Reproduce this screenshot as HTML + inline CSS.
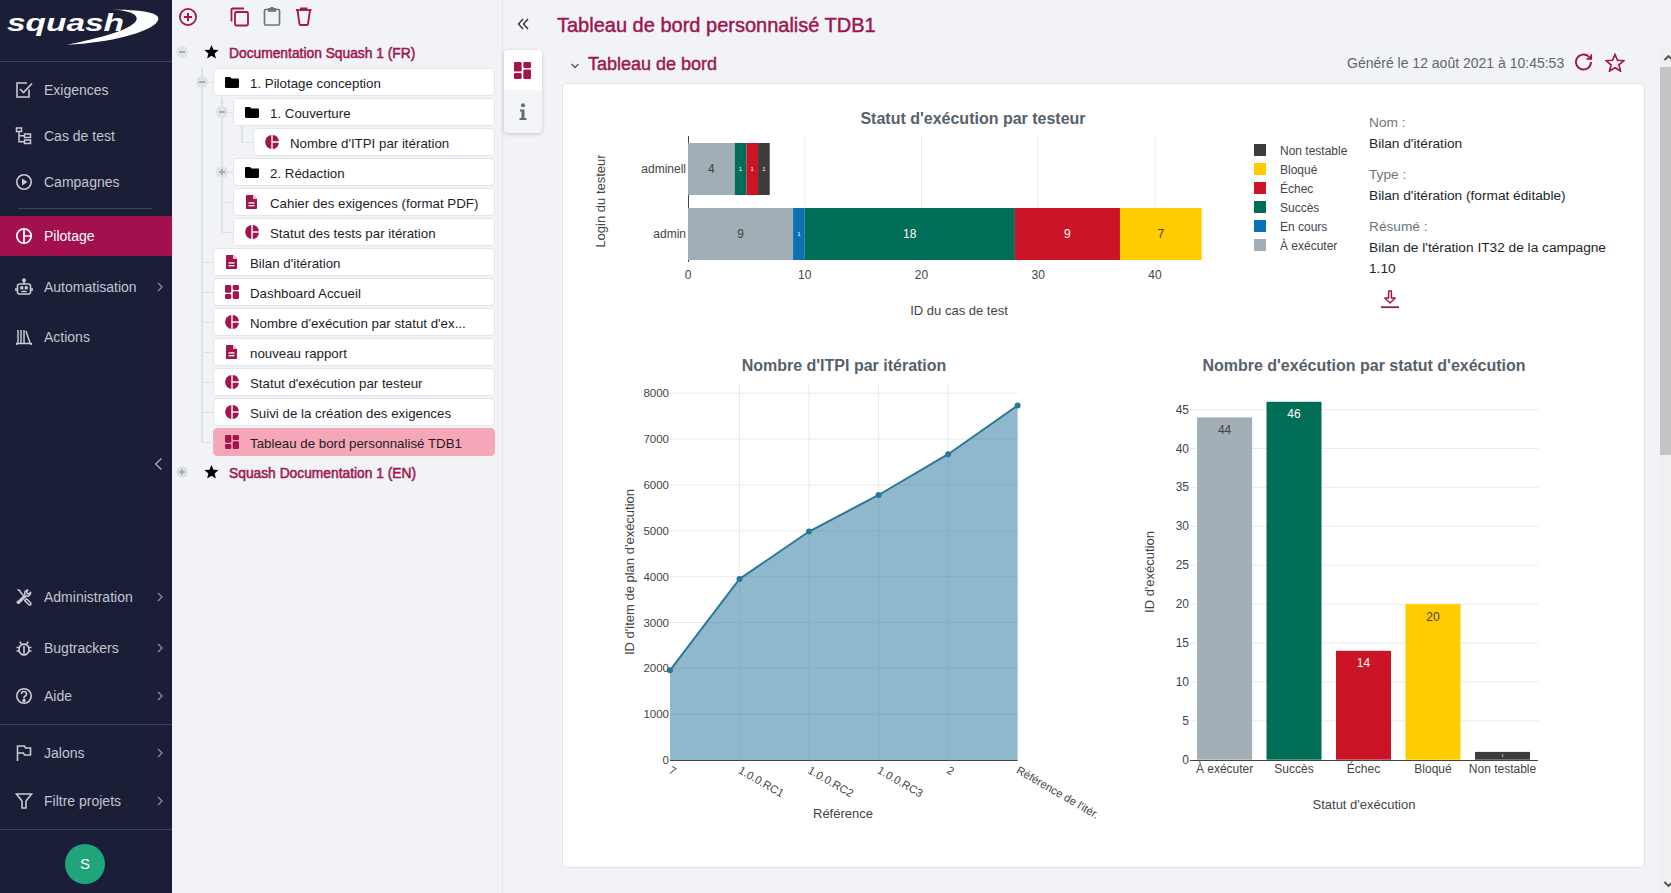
<!DOCTYPE html>
<html><head><meta charset="utf-8">
<style>
*{box-sizing:border-box;margin:0;padding:0}
html,body{width:1671px;height:893px;overflow:hidden;background:#f2f3f7;font-family:"Liberation Sans",sans-serif;position:relative}
.abs{position:absolute}
#side{position:absolute;left:0;top:0;width:172px;height:893px;background:#1b1e37}
.mi{position:absolute;left:0;width:172px;height:40px;color:#c2c5d0;font-size:14px}
.mi .t{position:absolute;left:44px;top:0;line-height:40px;white-space:nowrap}
.mi svg.ic{position:absolute;left:15px;top:10.5px;width:18px;height:18px}
.mi .ch{position:absolute;left:155px;top:14px;width:10px;height:12px}
.sep{position:absolute;height:1px;background:#3a3f5c}
#tree{position:absolute;left:172px;top:0;width:330px;height:893px;background:#f2f3f7}
#vline{position:absolute;left:502px;top:0;width:1px;height:893px;background:#e2e4ea}
.node{position:absolute;height:28px;background:#fff;border:1px solid #e3e6eb;border-radius:4px;font-size:13.3px;color:#1d1d1f;white-space:nowrap}
.node .t{position:absolute;top:1px;line-height:27px}
.node svg{position:absolute}
.tl{position:absolute;background:#dde1e6}
.tog{position:absolute;width:12px;height:12px;border-radius:50%;background:#dfe3e8}
.tog:after{content:"";position:absolute;left:3px;top:5px;width:6px;height:2px;background:#a4acb5}
.tog.plus:before{content:"";position:absolute;left:5px;top:3px;width:2px;height:6px;background:#a4acb5}
.proj{font-size:13.8px;-webkit-text-stroke:0.5px #a0164f;color:#a0164f;white-space:nowrap;line-height:18px}
.semi{-webkit-text-stroke:0.45px currentColor}
</style></head><body>

<div id="side">
  <!-- logo -->
  <svg class="abs" style="left:0;top:0" width="172" height="50" viewBox="0 0 172 50">
    <text x="7" y="30.7" font-family="Liberation Sans" font-weight="bold" font-style="italic" font-size="24.5" fill="#fff" textLength="117" lengthAdjust="spacingAndGlyphs">squash</text>
    <path d="M112 9.5 C150 10 163 14 157 22 C150 32 110 43 67 44.7 C100 38 130 30 136 21 C140 14 128 10.5 112 9.5 Z" fill="#fff"/>
  </svg>
  <div class="sep" style="left:0;top:61px;width:172px"></div>

  <div class="mi" style="top:70px"><svg class="ic" viewBox="0 0 18 18" fill="none" stroke="#c8cad4" stroke-width="1.6"><path d="M14 8.5V16H2V2h10"/><path d="M5 8l3.5 3.5L17 2.5"/></svg><span class="t">Exigences</span></div>
  <div class="mi" style="top:116px"><svg class="ic" viewBox="0 0 18 18" fill="none" stroke="#c8cad4" stroke-width="1.5"><rect x="1.5" y="1" width="5" height="3.5"/><rect x="9.5" y="7" width="6" height="3.5"/><rect x="9.5" y="13" width="6" height="3.5"/><path d="M4 4.5V14.7H9.5M4 8.8H9.5"/></svg><span class="t">Cas de test</span></div>
  <div class="mi" style="top:162px"><svg class="ic" viewBox="0 0 18 18" fill="none" stroke="#c8cad4" stroke-width="1.6"><circle cx="9" cy="9" r="7.2"/><path d="M7 5.5v7l5.5-3.5z" fill="#c8cad4" stroke="none"/></svg><span class="t">Campagnes</span></div>
  <div class="sep" style="left:18px;top:208px;width:134px"></div>
  <div class="mi" style="top:216px;background:#a2104d;color:#fff"><svg class="ic" viewBox="0 0 18 18" fill="none" stroke="#fff" stroke-width="1.7"><circle cx="9" cy="9" r="7.2"/><path d="M9 1.5v15M9 9h7.5"/></svg><span class="t" style="color:#fff">Pilotage</span></div>
  <div class="mi" style="top:267px"><svg class="ic" viewBox="0 0 18 18" fill="none" stroke="#c8cad4" stroke-width="1.6"><rect x="2.5" y="6" width="13" height="10" rx="2"/><path d="M9 6V3"/><circle cx="9" cy="2.2" r="1.2" fill="#c8cad4"/><path d="M1 10v3M17 10v3"/><rect x="6" y="9" width="1.5" height="1.5" fill="#c8cad4"/><rect x="10.5" y="9" width="1.5" height="1.5" fill="#c8cad4"/><path d="M6.5 13.5h5"/></svg><span class="t">Automatisation</span><svg class="ch" viewBox="0 0 10 12" fill="none" stroke="#8a8ea3" stroke-width="1.3"><path d="M3 2l4 4-4 4"/></svg></div>
  <div class="mi" style="top:317px"><svg class="ic" viewBox="0 0 18 18" fill="none" stroke="#c8cad4" stroke-width="1.5"><path d="M3 2v13M6 2v13M9 2v13M11 3l4 12M1 15.5h16M2 15v2M16 15v2"/></svg><span class="t">Actions</span></div>

  <div class="mi" style="top:577px"><svg class="ic" viewBox="0 0 18 18" fill="none" stroke="#c8cad4" stroke-width="1.5" stroke-linejoin="round"><path d="M2.5 1.5l2.5 1.2.6 1.8 4.6 4.6M11.5 10.8l4.2 4.2a1.3 1.3 0 0 1-1.8 1.8l-4.2-4.2z"/><path d="M2.2 14.6l6.6-6.6M13.3 2a3.3 3.3 0 0 0-3.4 4.6L9.7 7.5M13.3 2l-1.6 1.6.4 1.9 1.9.4 1.6-1.6a3.3 3.3 0 0 1-4.4 3.6l-7 7a1.1 1.1 0 0 1-1.6-1.6"/></svg><span class="t">Administration</span><svg class="ch" viewBox="0 0 10 12" fill="none" stroke="#8a8ea3" stroke-width="1.3"><path d="M3 2l4 4-4 4"/></svg></div>
  <div class="mi" style="top:628px"><svg class="ic" viewBox="0 0 18 18" fill="none" stroke="#c8cad4" stroke-width="1.6"><ellipse cx="9" cy="10.5" rx="5" ry="5.5"/><path d="M9 7v9M4 8.5H1.5M4 12H1.5M14 8.5h2.5M14 12h2.5M6 5l-1-2.5M12 5l1-2.5M6.5 5.5h5"/></svg><span class="t">Bugtrackers</span><svg class="ch" viewBox="0 0 10 12" fill="none" stroke="#8a8ea3" stroke-width="1.3"><path d="M3 2l4 4-4 4"/></svg></div>
  <div class="mi" style="top:676px"><svg class="ic" viewBox="0 0 18 18" fill="none" stroke="#c8cad4" stroke-width="1.6"><circle cx="9" cy="9" r="7.2"/><path d="M6.5 7a2.5 2.5 0 1 1 3.5 2.3c-.7.3-1 .8-1 1.5v.7"/><circle cx="9" cy="13.5" r=".9" fill="#c8cad4"/></svg><span class="t">Aide</span><svg class="ch" viewBox="0 0 10 12" fill="none" stroke="#8a8ea3" stroke-width="1.3"><path d="M3 2l4 4-4 4"/></svg></div>
  <div class="sep" style="left:0;top:724px;width:172px"></div>
  <div class="mi" style="top:733px"><svg class="ic" viewBox="0 0 18 18" fill="none" stroke="#c8cad4" stroke-width="1.6"><path d="M2.5 17V2h7l1 2h5v7h-6l-1-2H2.5"/></svg><span class="t">Jalons</span><svg class="ch" viewBox="0 0 10 12" fill="none" stroke="#8a8ea3" stroke-width="1.3"><path d="M3 2l4 4-4 4"/></svg></div>
  <div class="mi" style="top:781px"><svg class="ic" viewBox="0 0 18 18" fill="none" stroke="#c8cad4" stroke-width="1.6"><path d="M1.5 2h15l-5.5 7v7h-4V9z"/></svg><span class="t">Filtre projets</span><svg class="ch" viewBox="0 0 10 12" fill="none" stroke="#8a8ea3" stroke-width="1.3"><path d="M3 2l4 4-4 4"/></svg></div>
  <div class="sep" style="left:0;top:829px;width:172px"></div>
  <div class="abs" style="left:65px;top:844px;width:40px;height:40px;border-radius:50%;background:#20a57b;color:#fff;font-size:15px;line-height:40px;text-align:center">S</div>
  <svg class="abs" style="left:152px;top:457px" width="12" height="14" viewBox="0 0 12 14" fill="none" stroke="#b4b7c6" stroke-width="1.2"><path d="M9.5 1.5L3.5 7l6 5.5"/></svg>
</div>

<div id="tree">
  <svg class="abs" style="left:7px;top:7px" width="20" height="20" viewBox="0 0 20 20" fill="none" stroke="#a3154f" stroke-width="1.8"><circle cx="9" cy="10" r="8.1"/><path d="M9 6v8M5 10h8" stroke-width="2"/></svg>
  <svg class="abs" style="left:58px;top:7px" width="20" height="20" viewBox="0 0 20 20" fill="none" stroke="#a3154f" stroke-width="1.8"><path d="M1.5 14.5V2.5c0-.6.4-1 1-1h11.5"/><rect x="5" y="5" width="13" height="13.5" rx="1.2"/></svg>
  <svg class="abs" style="left:91px;top:6px" width="19" height="20" viewBox="0 0 19 20" fill="none" stroke="#6c7480" stroke-width="1.7"><path d="M5.5 3.5H2.5c-.6 0-1 .4-1 1v13.5c0 .6.4 1 1 1h13c.6 0 1-.4 1-1V4.5c0-.6-.4-1-1-1h-3"/><path d="M5.5 5.2h7V2.6H10.3a1.3 1.3 0 0 0-2.6 0H5.5z" fill="#6c7480" stroke-width="1.2"/></svg>
  <svg class="abs" style="left:123px;top:7px" width="19" height="20" viewBox="0 0 19 20" fill="none" stroke="#a3154f" stroke-width="1.8"><path d="M1 3h15.5"/><path d="M2.5 3l2 14c.1.6.5 1 1.1 1h6.3c.6 0 1-.4 1.1-1l2-14"/><path d="M6 3V1.5h5.5V3"/></svg>

  <div class="tog" style="left:4px;top:46px"></div>
  <svg class="abs" style="left:31.5px;top:43.5px" width="15" height="15" viewBox="0 0 24 24"><path d="M12 1.5l3.1 7.6 8.2.6-6.3 5.3 2 8L12 18.6 5 23l2-8L.7 9.7l8.2-.6z" fill="#000"/></svg>
  <div class="abs proj" style="left:57px;top:44.5px">Documentation Squash 1 (FR)</div>

  <div class="tl" style="left:29px;top:67px;width:2px;height:375px"></div>
  <div class="tl" style="left:49px;top:97px;width:2px;height:135px"></div>
  <div class="tl" style="left:69px;top:126px;width:1.5px;height:16px"></div>
<div class="node" style="left:41px;top:68px;width:282px"><svg style="left:11px;top:8px" width="14" height="11" viewBox="0 0 14 11"><path d="M0 1.2C0 .5.5 0 1.2 0H5l1.5 1.5h6.3c.7 0 1.2.5 1.2 1.2v7.1c0 .7-.5 1.2-1.2 1.2H1.2C.5 11 0 10.5 0 9.8z" fill="#000"/></svg><span class="t" style="left:36px">1. Pilotage conception</span></div>
<div class="tog" style="left:24px;top:76px"></div>
<div class="tl" style="left:36px;top:82px;width:6px;height:1px"></div>
<div class="node" style="left:61px;top:98px;width:262px"><svg style="left:11px;top:8px" width="14" height="11" viewBox="0 0 14 11"><path d="M0 1.2C0 .5.5 0 1.2 0H5l1.5 1.5h6.3c.7 0 1.2.5 1.2 1.2v7.1c0 .7-.5 1.2-1.2 1.2H1.2C.5 11 0 10.5 0 9.8z" fill="#000"/></svg><span class="t" style="left:36px">1. Couverture</span></div>
<div class="tog" style="left:44px;top:106px"></div>
<div class="tl" style="left:56px;top:112px;width:6px;height:1px"></div>
<div class="node" style="left:81px;top:128px;width:242px"><svg style="left:11px;top:6px" width="14" height="14" viewBox="0 0 14 14"><path d="M6.3 .05A7 7 0 0 0 6.3 13.95z" fill="#a3154f"/><path d="M7.7 .05A7 7 0 0 1 13.95 6.3H7.7z" fill="#a3154f"/><path d="M7.7 7.7h6.25A7 7 0 0 1 7.7 13.95z" fill="#a3154f"/></svg><span class="t" style="left:36px">Nombre d'ITPI par itération</span></div>
<div class="tl" style="left:70px;top:142px;width:12px;height:1px"></div>
<div class="node" style="left:61px;top:158px;width:262px"><svg style="left:11px;top:8px" width="14" height="11" viewBox="0 0 14 11"><path d="M0 1.2C0 .5.5 0 1.2 0H5l1.5 1.5h6.3c.7 0 1.2.5 1.2 1.2v7.1c0 .7-.5 1.2-1.2 1.2H1.2C.5 11 0 10.5 0 9.8z" fill="#000"/></svg><span class="t" style="left:36px">2. Rédaction</span></div>
<div class="tog plus" style="left:44px;top:166px"></div>
<div class="tl" style="left:56px;top:172px;width:6px;height:1px"></div>
<div class="node" style="left:61px;top:188px;width:262px"><svg style="left:12px;top:6px" width="11" height="14" viewBox="0 0 11 14"><path d="M1 0h6l4 4v9c0 .6-.4 1-1 1H1c-.6 0-1-.4-1-1V1c0-.6.4-1 1-1z" fill="#a3154f"/><path d="M7 0v4h4" fill="#f2c9d6"/><rect x="2.5" y="7.3" width="6" height="1.3" fill="#fff"/><rect x="2.5" y="10" width="6" height="1.3" fill="#fff"/></svg><span class="t" style="left:36px">Cahier des exigences (format PDF)</span></div>
<div class="tl" style="left:50px;top:202px;width:12px;height:1px"></div>
<div class="node" style="left:61px;top:218px;width:262px"><svg style="left:11px;top:6px" width="14" height="14" viewBox="0 0 14 14"><path d="M6.3 .05A7 7 0 0 0 6.3 13.95z" fill="#a3154f"/><path d="M7.7 .05A7 7 0 0 1 13.95 6.3H7.7z" fill="#a3154f"/><path d="M7.7 7.7h6.25A7 7 0 0 1 7.7 13.95z" fill="#a3154f"/></svg><span class="t" style="left:36px">Statut des tests par itération</span></div>
<div class="tl" style="left:50px;top:232px;width:12px;height:1px"></div>
<div class="node" style="left:41px;top:248px;width:282px"><svg style="left:12px;top:6px" width="11" height="14" viewBox="0 0 11 14"><path d="M1 0h6l4 4v9c0 .6-.4 1-1 1H1c-.6 0-1-.4-1-1V1c0-.6.4-1 1-1z" fill="#a3154f"/><path d="M7 0v4h4" fill="#f2c9d6"/><rect x="2.5" y="7.3" width="6" height="1.3" fill="#fff"/><rect x="2.5" y="10" width="6" height="1.3" fill="#fff"/></svg><span class="t" style="left:36px">Bilan d'itération</span></div>
<div class="tl" style="left:30px;top:262px;width:12px;height:1px"></div>
<div class="node" style="left:41px;top:278px;width:282px"><svg style="left:11px;top:6px" width="14" height="14" viewBox="0 0 14 14" fill="#a3154f"><rect x="0" y="0" width="6.3" height="7.8" rx="1.3"/><rect x="0" y="9" width="6.3" height="5" rx="1.3"/><rect x="7.7" y="0" width="6.3" height="5" rx="1.3"/><rect x="7.7" y="6.2" width="6.3" height="7.8" rx="1.3"/></svg><span class="t" style="left:36px">Dashboard Accueil</span></div>
<div class="tl" style="left:30px;top:292px;width:12px;height:1px"></div>
<div class="node" style="left:41px;top:308px;width:282px"><svg style="left:11px;top:6px" width="14" height="14" viewBox="0 0 14 14"><path d="M6.3 .05A7 7 0 0 0 6.3 13.95z" fill="#a3154f"/><path d="M7.7 .05A7 7 0 0 1 13.95 6.3H7.7z" fill="#a3154f"/><path d="M7.7 7.7h6.25A7 7 0 0 1 7.7 13.95z" fill="#a3154f"/></svg><span class="t" style="left:36px">Nombre d'exécution par statut d'ex...</span></div>
<div class="tl" style="left:30px;top:322px;width:12px;height:1px"></div>
<div class="node" style="left:41px;top:338px;width:282px"><svg style="left:12px;top:6px" width="11" height="14" viewBox="0 0 11 14"><path d="M1 0h6l4 4v9c0 .6-.4 1-1 1H1c-.6 0-1-.4-1-1V1c0-.6.4-1 1-1z" fill="#a3154f"/><path d="M7 0v4h4" fill="#f2c9d6"/><rect x="2.5" y="7.3" width="6" height="1.3" fill="#fff"/><rect x="2.5" y="10" width="6" height="1.3" fill="#fff"/></svg><span class="t" style="left:36px">nouveau rapport</span></div>
<div class="tl" style="left:30px;top:352px;width:12px;height:1px"></div>
<div class="node" style="left:41px;top:368px;width:282px"><svg style="left:11px;top:6px" width="14" height="14" viewBox="0 0 14 14"><path d="M6.3 .05A7 7 0 0 0 6.3 13.95z" fill="#a3154f"/><path d="M7.7 .05A7 7 0 0 1 13.95 6.3H7.7z" fill="#a3154f"/><path d="M7.7 7.7h6.25A7 7 0 0 1 7.7 13.95z" fill="#a3154f"/></svg><span class="t" style="left:36px">Statut d'exécution par testeur</span></div>
<div class="tl" style="left:30px;top:382px;width:12px;height:1px"></div>
<div class="node" style="left:41px;top:398px;width:282px"><svg style="left:11px;top:6px" width="14" height="14" viewBox="0 0 14 14"><path d="M6.3 .05A7 7 0 0 0 6.3 13.95z" fill="#a3154f"/><path d="M7.7 .05A7 7 0 0 1 13.95 6.3H7.7z" fill="#a3154f"/><path d="M7.7 7.7h6.25A7 7 0 0 1 7.7 13.95z" fill="#a3154f"/></svg><span class="t" style="left:36px">Suivi de la création des exigences</span></div>
<div class="tl" style="left:30px;top:412px;width:12px;height:1px"></div>
<div class="node" style="left:41px;top:428px;width:282px;background:#f5a7b7;border-color:#f5a7b7"><svg style="left:11px;top:6px" width="14" height="14" viewBox="0 0 14 14" fill="#a3154f"><rect x="0" y="0" width="6.3" height="7.8" rx="1.3"/><rect x="0" y="9" width="6.3" height="5" rx="1.3"/><rect x="7.7" y="0" width="6.3" height="5" rx="1.3"/><rect x="7.7" y="6.2" width="6.3" height="7.8" rx="1.3"/></svg><span class="t" style="left:36px">Tableau de bord personnalisé TDB1</span></div>
<div class="tl" style="left:30px;top:442px;width:12px;height:1px"></div>
  <div class="tog plus" style="left:4px;top:466px"></div>
  <svg class="abs" style="left:31.5px;top:463.5px" width="15" height="15" viewBox="0 0 24 24"><path d="M12 1.5l3.1 7.6 8.2.6-6.3 5.3 2 8L12 18.6 5 23l2-8L.7 9.7l8.2-.6z" fill="#000"/></svg>
  <div class="abs proj" style="left:57px;top:464.5px">Squash Documentation 1 (EN)</div>
</div>
<div id="vline"></div>


<!-- main header -->
<svg class="abs" style="left:516px;top:17px" width="14" height="14" viewBox="0 0 14 14" fill="none" stroke="#333" stroke-width="1.4"><path d="M7 2L2.5 7 7 12M12 2L7.5 7 12 12"/></svg>
<div class="abs semi" style="left:557px;top:12px;font-size:20px;line-height:26px;color:#9c1750;white-space:nowrap" id="ttl">Tableau de bord personnalisé TDB1</div>

<div class="abs" style="left:504px;top:50px;width:38px;height:83px;border-radius:4px;box-shadow:0 1px 4px rgba(0,0,0,.18);background:#f3f4f7;overflow:hidden">
  <div class="abs" style="left:0;top:0;width:38px;height:40px;background:#fff"></div>
  <svg class="abs" style="left:10px;top:12px" width="17" height="17" viewBox="0 0 14 14" fill="#a3154f"><rect x="0" y="0" width="6.3" height="7.8" rx="1.1"/><rect x="0" y="9" width="6.3" height="5" rx="1.1"/><rect x="7.7" y="0" width="6.3" height="5" rx="1.1"/><rect x="7.7" y="6.2" width="6.3" height="7.8" rx="1.1"/></svg>
  <svg class="abs" style="left:14px;top:53px" width="10" height="18" viewBox="0 0 10 18" fill="#666b73"><circle cx="5" cy="2.2" r="2"/><path d="M2 6.5h4.5v8.5H8.5V17H1.5v-2H3.5V8.5H2z"/></svg>
</div>

<svg class="abs" style="left:569px;top:61px" width="12" height="10" viewBox="0 0 12 10" fill="none" stroke="#555" stroke-width="1.3"><path d="M2.5 3l3.5 3.5L9.5 3"/></svg>
<div class="abs semi" style="left:588px;top:53px;font-size:18px;line-height:22px;color:#9c1750;white-space:nowrap" id="sub">Tableau de bord</div>
<div class="abs" style="left:1347px;top:54px;font-size:14px;line-height:18px;color:#5f6670;white-space:nowrap" id="gen">Généré le 12 août 2021 à 10:45:53</div>
<svg class="abs" style="left:1574px;top:52px" width="20" height="20" viewBox="0 0 20 20" fill="none" stroke="#a3154f" stroke-width="1.9"><path d="M17 10a7.5 7.5 0 1 1-2.2-5.3"/><path d="M17.5 2.2v5h-5" fill="#a3154f" stroke-width="1.2"/></svg>
<svg class="abs" style="left:1605px;top:53px" width="20" height="19" viewBox="0 0 24 23" fill="none" stroke="#a3154f" stroke-width="2"><path d="M12 1.8l3 7 7.6.6-5.8 5 1.8 7.4L12 17.8 5.4 21.8l1.8-7.4-5.8-5 7.6-.6z"/></svg>

<!-- scrollbar -->
<div class="abs" style="left:1660px;top:48px;width:11px;height:845px;background:#f0f0f0"></div>
<div class="abs" style="left:1660px;top:67px;width:11px;height:388px;background:#c4c4c4"></div>
<svg class="abs" style="left:1660px;top:52px" width="11" height="12" viewBox="0 0 11 12" fill="none" stroke="#505050" stroke-width="1.8"><path d="M4.5 8l4-4 4 4"/></svg>
<svg class="abs" style="left:1660px;top:878px" width="11" height="12" viewBox="0 0 11 12" fill="none" stroke="#505050" stroke-width="1.8"><path d="M4.5 4l4 4 4-4"/></svg>

<!-- card -->
<div class="abs" style="left:562px;top:83px;width:1083px;height:785px;background:#fff;border:1px solid #dfe2e7;border-radius:5px"></div>

<!--CHARTS-->
<svg class="abs" style="left:0;top:0" width="1671" height="893" viewBox="0 0 1671 893">
<text x="973" y="124" text-anchor="middle" font-family="Liberation Sans" font-size="16" font-weight="bold" fill="#56616c">Statut d'exécution par testeur</text>
<line x1="804.8" y1="136" x2="804.8" y2="260" stroke="#ebebeb" stroke-width="1"/>
<line x1="921.5" y1="136" x2="921.5" y2="260" stroke="#ebebeb" stroke-width="1"/>
<line x1="1038.2" y1="136" x2="1038.2" y2="260" stroke="#ebebeb" stroke-width="1"/>
<line x1="1155.0" y1="136" x2="1155.0" y2="260" stroke="#ebebeb" stroke-width="1"/>
<line x1="688.5" y1="136" x2="688.5" y2="262" stroke="#444" stroke-width="1"/>
<rect x="688.00" y="143" width="46.70" height="52" fill="#a2aeb5"/>
<rect x="734.70" y="143" width="11.67" height="52" fill="#006e56"/>
<rect x="746.38" y="143" width="11.67" height="52" fill="#cb1425"/>
<rect x="758.05" y="143" width="11.68" height="52" fill="#3c3c3c"/>
<rect x="688.00" y="208" width="105.08" height="52" fill="#a2aeb5"/>
<rect x="793.08" y="208" width="11.67" height="52" fill="#0a71b4"/>
<rect x="804.75" y="208" width="210.15" height="52" fill="#006e56"/>
<rect x="1014.90" y="208" width="105.07" height="52" fill="#cb1425"/>
<rect x="1119.97" y="208" width="81.73" height="52" fill="#ffcc00"/>
<text x="711.4" y="173" text-anchor="middle" font-family="Liberation Sans" font-size="12" fill="#444">4</text>
<text x="740.5" y="171" text-anchor="middle" font-family="Liberation Sans" font-size="6" fill="#fff">1</text>
<text x="752.2" y="171" text-anchor="middle" font-family="Liberation Sans" font-size="6" fill="#fff">1</text>
<text x="763.9" y="171" text-anchor="middle" font-family="Liberation Sans" font-size="6" fill="#fff">1</text>
<text x="740.5" y="238" text-anchor="middle" font-family="Liberation Sans" font-size="12" fill="#444">9</text>
<text x="798.9" y="236" text-anchor="middle" font-family="Liberation Sans" font-size="6" fill="#fff">1</text>
<text x="909.8" y="238" text-anchor="middle" font-family="Liberation Sans" font-size="12" fill="#fff">18</text>
<text x="1067.4" y="238" text-anchor="middle" font-family="Liberation Sans" font-size="12" fill="#fff">9</text>
<text x="1160.8" y="238" text-anchor="middle" font-family="Liberation Sans" font-size="12" fill="#444">7</text>
<text x="688.0" y="279" text-anchor="middle" font-family="Liberation Sans" font-size="12" fill="#444">0</text>
<text x="804.8" y="279" text-anchor="middle" font-family="Liberation Sans" font-size="12" fill="#444">10</text>
<text x="921.5" y="279" text-anchor="middle" font-family="Liberation Sans" font-size="12" fill="#444">20</text>
<text x="1038.2" y="279" text-anchor="middle" font-family="Liberation Sans" font-size="12" fill="#444">30</text>
<text x="1155.0" y="279" text-anchor="middle" font-family="Liberation Sans" font-size="12" fill="#444">40</text>
<text x="686" y="173" text-anchor="end" font-family="Liberation Sans" font-size="12" fill="#444">adminell</text>
<text x="686" y="238" text-anchor="end" font-family="Liberation Sans" font-size="12" fill="#444">admin</text>
<text x="959.0" y="315" text-anchor="middle" font-family="Liberation Sans" font-size="13" fill="#444">ID du cas de test</text>
<text transform="translate(605 201) rotate(-90)" text-anchor="middle" font-family="Liberation Sans" font-size="13" fill="#444">Login du testeur</text>
<rect x="1254" y="144" width="12" height="12" fill="#3c3c3c"/>
<text x="1280" y="155" font-family="Liberation Sans" font-size="12" fill="#444">Non testable</text>
<rect x="1254" y="163" width="12" height="12" fill="#ffcc00"/>
<text x="1280" y="174" font-family="Liberation Sans" font-size="12" fill="#444">Bloqué</text>
<rect x="1254" y="182" width="12" height="12" fill="#cb1425"/>
<text x="1280" y="193" font-family="Liberation Sans" font-size="12" fill="#444">Échec</text>
<rect x="1254" y="201" width="12" height="12" fill="#006e56"/>
<text x="1280" y="212" font-family="Liberation Sans" font-size="12" fill="#444">Succès</text>
<rect x="1254" y="220" width="12" height="12" fill="#0a71b4"/>
<text x="1280" y="231" font-family="Liberation Sans" font-size="12" fill="#444">En cours</text>
<rect x="1254" y="239" width="12" height="12" fill="#a2aeb5"/>
<text x="1280" y="250" font-family="Liberation Sans" font-size="12" fill="#444">À exécuter</text>
<text x="1369" y="127" font-family="Liberation Sans" font-size="13.7" fill="#6c757d">Nom :</text>
<text x="1369" y="148" font-family="Liberation Sans" font-size="13.7" fill="#212529">Bilan d'itération</text>
<text x="1369" y="179" font-family="Liberation Sans" font-size="13.7" fill="#6c757d">Type :</text>
<text x="1369" y="200" font-family="Liberation Sans" font-size="13.7" fill="#212529">Bilan d'itération (format éditable)</text>
<text x="1369" y="231" font-family="Liberation Sans" font-size="13.7" fill="#6c757d">Résumé :</text>
<text x="1369" y="252" font-family="Liberation Sans" font-size="13.7" fill="#212529">Bilan de l'tération IT32 de la campagne</text>
<text x="1369" y="273" font-family="Liberation Sans" font-size="13.7" fill="#212529">1.10</text>
<g fill="none" stroke="#a3154f" stroke-width="1.5" stroke-linejoin="round"><path d="M1388.6 291h2.8v7h3.8l-5.2 5-5.2-5h3.8z"/><path d="M1381 307.2h18" stroke-width="1.8"/></g>
<text x="844" y="371" text-anchor="middle" font-family="Liberation Sans" font-size="16" font-weight="bold" fill="#56616c">Nombre d'ITPI par itération</text>
<line x1="670" y1="714.1" x2="1017.6" y2="714.1" stroke="#eaeaea" stroke-width="1"/>
<line x1="670" y1="668.3" x2="1017.6" y2="668.3" stroke="#eaeaea" stroke-width="1"/>
<line x1="670" y1="622.5" x2="1017.6" y2="622.5" stroke="#eaeaea" stroke-width="1"/>
<line x1="670" y1="576.6" x2="1017.6" y2="576.6" stroke="#eaeaea" stroke-width="1"/>
<line x1="670" y1="530.8" x2="1017.6" y2="530.8" stroke="#eaeaea" stroke-width="1"/>
<line x1="670" y1="484.9" x2="1017.6" y2="484.9" stroke="#eaeaea" stroke-width="1"/>
<line x1="670" y1="439.1" x2="1017.6" y2="439.1" stroke="#eaeaea" stroke-width="1"/>
<line x1="670" y1="393.2" x2="1017.6" y2="393.2" stroke="#eaeaea" stroke-width="1"/>
<line x1="739.5" y1="384" x2="739.5" y2="760" stroke="#eaeaea" stroke-width="1"/>
<line x1="809.0" y1="384" x2="809.0" y2="760" stroke="#eaeaea" stroke-width="1"/>
<line x1="878.6" y1="384" x2="878.6" y2="760" stroke="#eaeaea" stroke-width="1"/>
<line x1="948.1" y1="384" x2="948.1" y2="760" stroke="#eaeaea" stroke-width="1"/>
<polygon points="670,760 670.0,670.3 739.5,579.0 809.0,531.5 878.6,495.0 948.1,454.2 1017.6,405.5 1017.6,760" fill="#8fb8cd" fill-opacity="1"/>
<line x1="739.5" y1="386" x2="739.5" y2="760" stroke="#86adc1" stroke-width="1" clip-path="url(#areaclip)"/>
<line x1="809.0" y1="386" x2="809.0" y2="760" stroke="#86adc1" stroke-width="1" clip-path="url(#areaclip)"/>
<line x1="878.6" y1="386" x2="878.6" y2="760" stroke="#86adc1" stroke-width="1" clip-path="url(#areaclip)"/>
<line x1="948.1" y1="386" x2="948.1" y2="760" stroke="#86adc1" stroke-width="1" clip-path="url(#areaclip)"/>
<line x1="670" y1="714.1" x2="1017.6" y2="714.1" stroke="#86adc1" stroke-width="1" clip-path="url(#areaclip)"/>
<line x1="670" y1="668.3" x2="1017.6" y2="668.3" stroke="#86adc1" stroke-width="1" clip-path="url(#areaclip)"/>
<line x1="670" y1="622.5" x2="1017.6" y2="622.5" stroke="#86adc1" stroke-width="1" clip-path="url(#areaclip)"/>
<line x1="670" y1="576.6" x2="1017.6" y2="576.6" stroke="#86adc1" stroke-width="1" clip-path="url(#areaclip)"/>
<line x1="670" y1="530.8" x2="1017.6" y2="530.8" stroke="#86adc1" stroke-width="1" clip-path="url(#areaclip)"/>
<line x1="670" y1="484.9" x2="1017.6" y2="484.9" stroke="#86adc1" stroke-width="1" clip-path="url(#areaclip)"/>
<line x1="670" y1="439.1" x2="1017.6" y2="439.1" stroke="#86adc1" stroke-width="1" clip-path="url(#areaclip)"/>
<line x1="670" y1="393.2" x2="1017.6" y2="393.2" stroke="#86adc1" stroke-width="1" clip-path="url(#areaclip)"/>
<clipPath id="areaclip"><polygon points="670,760 670.0,670.3 739.5,579.0 809.0,531.5 878.6,495.0 948.1,454.2 1017.6,405.5 1017.6,760"/></clipPath>
<polyline points="670.0,670.3 739.5,579.0 809.0,531.5 878.6,495.0 948.1,454.2 1017.6,405.5" fill="none" stroke="#2a7898" stroke-width="2"/>
<circle cx="670.0" cy="670.3" r="3" fill="#2a7898"/>
<circle cx="739.5" cy="579.0" r="3" fill="#2a7898"/>
<circle cx="809.0" cy="531.5" r="3" fill="#2a7898"/>
<circle cx="878.6" cy="495.0" r="3" fill="#2a7898"/>
<circle cx="948.1" cy="454.2" r="3" fill="#2a7898"/>
<circle cx="1017.6" cy="405.5" r="3" fill="#2a7898"/>
<line x1="670" y1="760.5" x2="1017.6" y2="760.5" stroke="#444" stroke-width="1"/>
<text x="669" y="764.0" text-anchor="end" font-family="Liberation Sans" font-size="11.5" fill="#444">0</text>
<text x="669" y="718.1" text-anchor="end" font-family="Liberation Sans" font-size="11.5" fill="#444">1000</text>
<text x="669" y="672.3" text-anchor="end" font-family="Liberation Sans" font-size="11.5" fill="#444">2000</text>
<text x="669" y="626.5" text-anchor="end" font-family="Liberation Sans" font-size="11.5" fill="#444">3000</text>
<text x="669" y="580.6" text-anchor="end" font-family="Liberation Sans" font-size="11.5" fill="#444">4000</text>
<text x="669" y="534.8" text-anchor="end" font-family="Liberation Sans" font-size="11.5" fill="#444">5000</text>
<text x="669" y="488.9" text-anchor="end" font-family="Liberation Sans" font-size="11.5" fill="#444">6000</text>
<text x="669" y="443.1" text-anchor="end" font-family="Liberation Sans" font-size="11.5" fill="#444">7000</text>
<text x="669" y="397.2" text-anchor="end" font-family="Liberation Sans" font-size="11.5" fill="#444">8000</text>
<text transform="translate(668.0 772.5) rotate(30)" font-family="Liberation Sans" font-size="11.2" fill="#444">7</text>
<text transform="translate(737.5 772.5) rotate(30)" font-family="Liberation Sans" font-size="11.2" fill="#444">1.0.0.RC1</text>
<text transform="translate(807.0 772.5) rotate(30)" font-family="Liberation Sans" font-size="11.2" fill="#444">1.0.0.RC2</text>
<text transform="translate(876.6 772.5) rotate(30)" font-family="Liberation Sans" font-size="11.2" fill="#444">1.0.0.RC3</text>
<text transform="translate(946.1 772.5) rotate(30)" font-family="Liberation Sans" font-size="11.2" fill="#444">2</text>
<text transform="translate(1015.6 772.5) rotate(30)" font-family="Liberation Sans" font-size="11.2" fill="#444">Référence de l'itér.</text>
<text x="843.0" y="818" text-anchor="middle" font-family="Liberation Sans" font-size="13" fill="#444">Référence</text>
<text transform="translate(634 572) rotate(-90)" text-anchor="middle" font-family="Liberation Sans" font-size="13" fill="#444">ID d'item de plan d'exécution</text>
<text x="1364" y="371" text-anchor="middle" font-family="Liberation Sans" font-size="16" font-weight="bold" fill="#56616c">Nombre d'exécution par statut d'exécution</text>
<line x1="1190" y1="720.8" x2="1538" y2="720.8" stroke="#eaeaea" stroke-width="1"/>
<line x1="1190" y1="681.9" x2="1538" y2="681.9" stroke="#eaeaea" stroke-width="1"/>
<line x1="1190" y1="643.0" x2="1538" y2="643.0" stroke="#eaeaea" stroke-width="1"/>
<line x1="1190" y1="604.1" x2="1538" y2="604.1" stroke="#eaeaea" stroke-width="1"/>
<line x1="1190" y1="565.2" x2="1538" y2="565.2" stroke="#eaeaea" stroke-width="1"/>
<line x1="1190" y1="526.3" x2="1538" y2="526.3" stroke="#eaeaea" stroke-width="1"/>
<line x1="1190" y1="487.4" x2="1538" y2="487.4" stroke="#eaeaea" stroke-width="1"/>
<line x1="1190" y1="448.5" x2="1538" y2="448.5" stroke="#eaeaea" stroke-width="1"/>
<line x1="1190" y1="409.6" x2="1538" y2="409.6" stroke="#eaeaea" stroke-width="1"/>
<rect x="1197.1" y="417.4" width="55" height="342.3" fill="#a2aeb5"/>
<rect x="1266.5" y="401.8" width="55" height="357.9" fill="#006e56"/>
<rect x="1336.0" y="650.8" width="55" height="108.9" fill="#cb1425"/>
<rect x="1405.5" y="604.1" width="55" height="155.6" fill="#ffcc00"/>
<rect x="1475.0" y="751.9" width="55" height="7.8" fill="#3c3c3c"/>
<line x1="1190" y1="760.5" x2="1538" y2="760.5" stroke="#444" stroke-width="1"/>
<text x="1224.6" y="434" text-anchor="middle" font-family="Liberation Sans" font-size="12" fill="#444">44</text>
<text x="1294.0" y="418" text-anchor="middle" font-family="Liberation Sans" font-size="12" fill="#fff">46</text>
<text x="1363.5" y="667" text-anchor="middle" font-family="Liberation Sans" font-size="12" fill="#fff">14</text>
<text x="1433.0" y="621" text-anchor="middle" font-family="Liberation Sans" font-size="12" fill="#444">20</text>
<text x="1502.5" y="757" text-anchor="middle" font-family="Liberation Sans" font-size="4" fill="#fff">1</text>
<text x="1189" y="763.7" text-anchor="end" font-family="Liberation Sans" font-size="12" fill="#444">0</text>
<text x="1189" y="724.8" text-anchor="end" font-family="Liberation Sans" font-size="12" fill="#444">5</text>
<text x="1189" y="685.9" text-anchor="end" font-family="Liberation Sans" font-size="12" fill="#444">10</text>
<text x="1189" y="647.0" text-anchor="end" font-family="Liberation Sans" font-size="12" fill="#444">15</text>
<text x="1189" y="608.1" text-anchor="end" font-family="Liberation Sans" font-size="12" fill="#444">20</text>
<text x="1189" y="569.2" text-anchor="end" font-family="Liberation Sans" font-size="12" fill="#444">25</text>
<text x="1189" y="530.3" text-anchor="end" font-family="Liberation Sans" font-size="12" fill="#444">30</text>
<text x="1189" y="491.4" text-anchor="end" font-family="Liberation Sans" font-size="12" fill="#444">35</text>
<text x="1189" y="452.5" text-anchor="end" font-family="Liberation Sans" font-size="12" fill="#444">40</text>
<text x="1189" y="413.6" text-anchor="end" font-family="Liberation Sans" font-size="12" fill="#444">45</text>
<text x="1224.6" y="773" text-anchor="middle" font-family="Liberation Sans" font-size="12" fill="#444">À exécuter</text>
<text x="1294.0" y="773" text-anchor="middle" font-family="Liberation Sans" font-size="12" fill="#444">Succès</text>
<text x="1363.5" y="773" text-anchor="middle" font-family="Liberation Sans" font-size="12" fill="#444">Échec</text>
<text x="1433.0" y="773" text-anchor="middle" font-family="Liberation Sans" font-size="12" fill="#444">Bloqué</text>
<text x="1502.5" y="773" text-anchor="middle" font-family="Liberation Sans" font-size="12" fill="#444">Non testable</text>
<text x="1364.0" y="809" text-anchor="middle" font-family="Liberation Sans" font-size="13" fill="#444">Statut d'exécution</text>
<text transform="translate(1154 572) rotate(-90)" text-anchor="middle" font-family="Liberation Sans" font-size="13" fill="#444">ID d'exécution</text>
</svg>
<!--/CHARTS-->
</body></html>
